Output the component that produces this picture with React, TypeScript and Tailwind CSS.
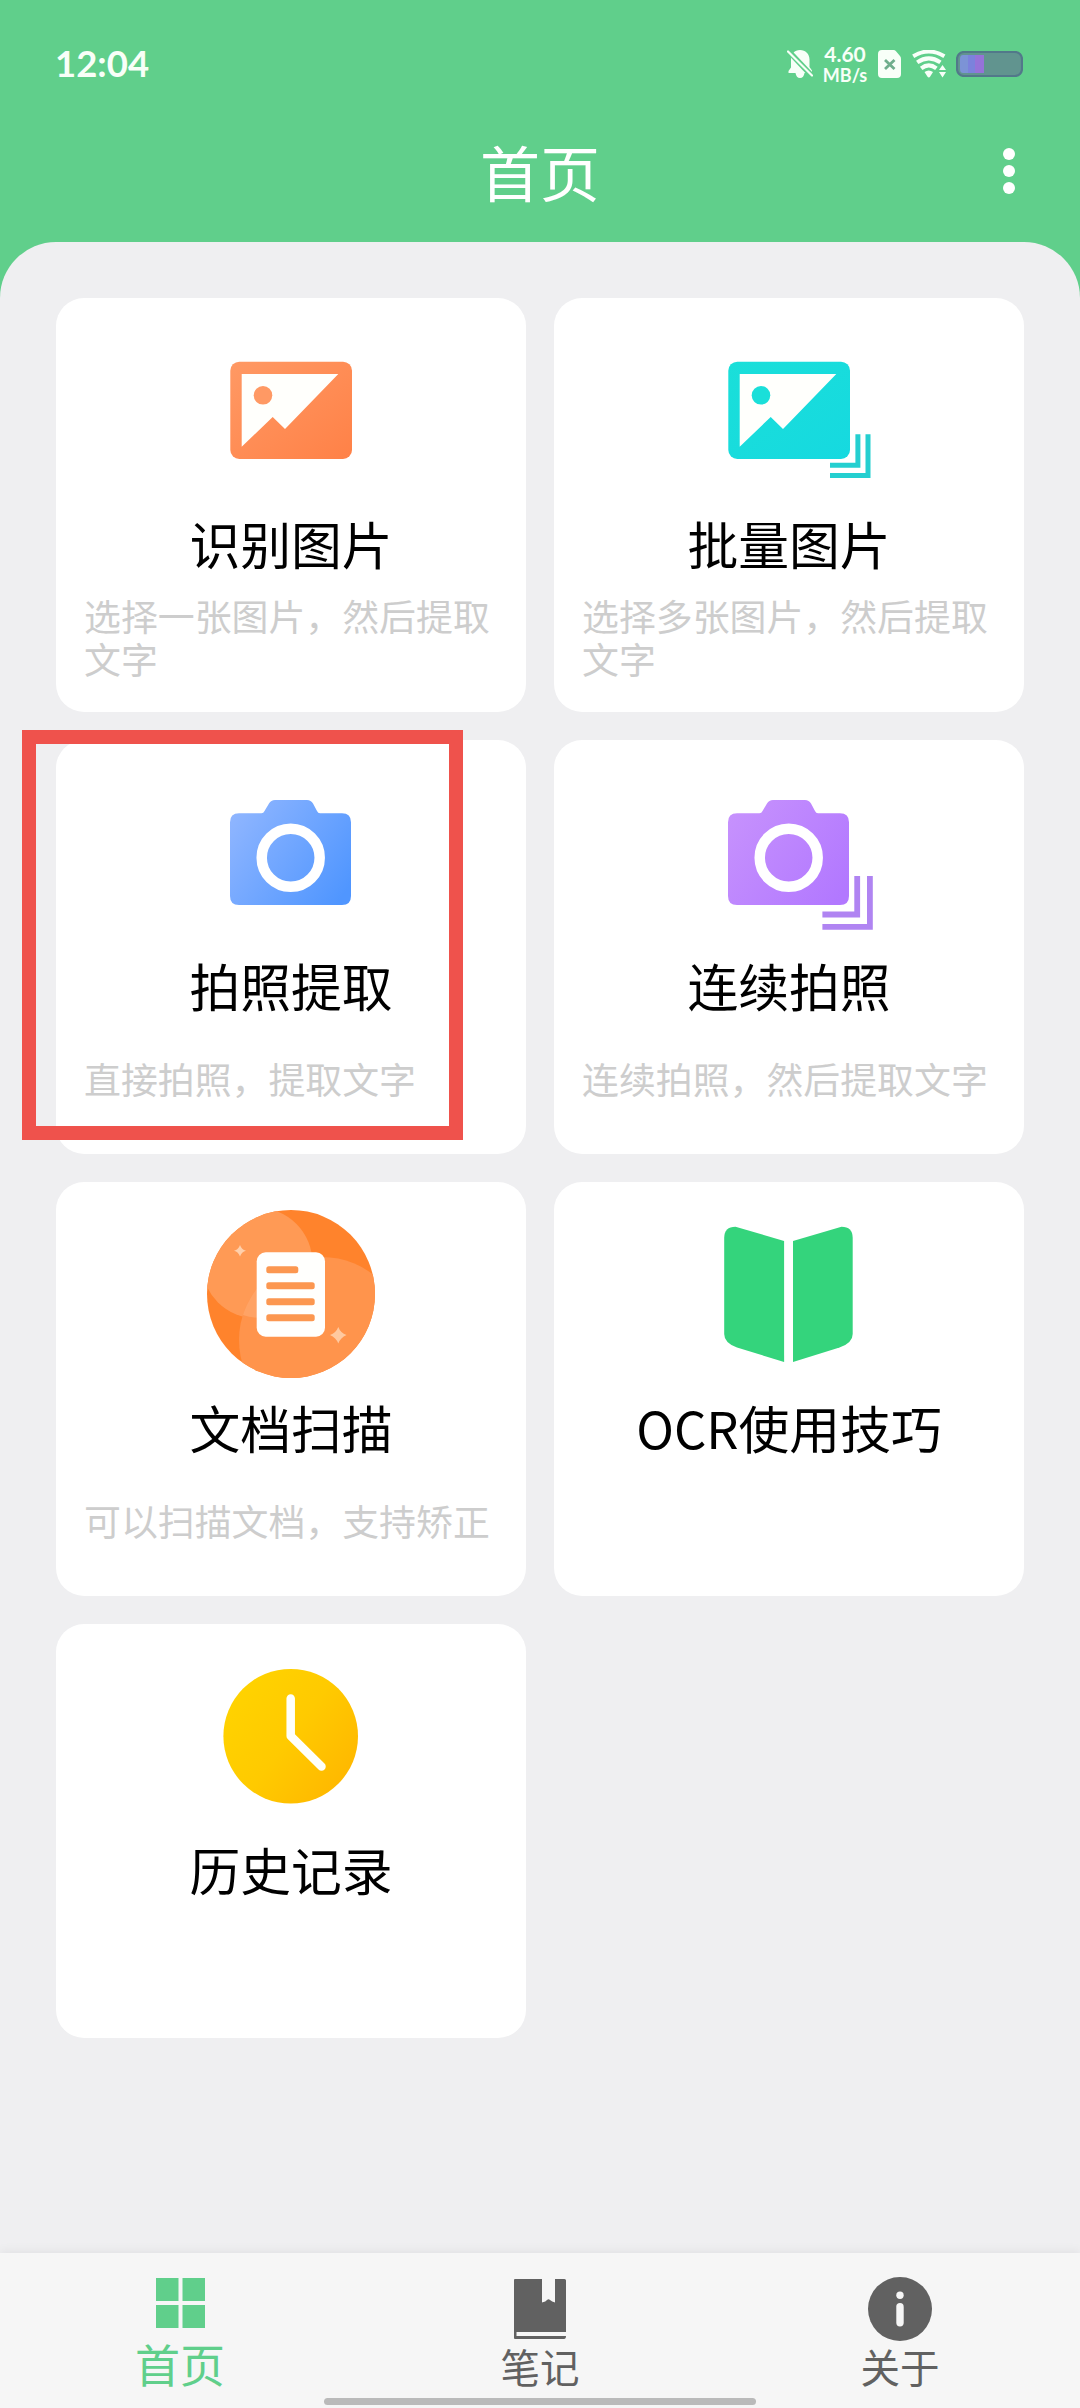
import type { ReactNode } from "react";

type Feature = {
    title: string;
    desc?: string;
    icon: ReactNode;
};

function BellOffIcon() {
    return (
        <svg width="26" height="30" viewBox="0 0 26 30" fill="none">
            <path d="M13 1C18.5 1 22.5 5 22.5 10.5V18L25 21.5V24H17.5C17 27 15.500 29 13 29S9 27 8.500 24H1.500V22L4 18.500V10.500C4 5 7.500 1 13 1Z" fill="#f8fff8" />
            <path d="M0 0.500L26 28" stroke="#60cf8b" strokeWidth="5.500" />
            <path d="M1 2.500L25 26.500" stroke="#f8fff8" strokeWidth="2.200" strokeLinecap="round" />
        </svg>
    );
}

function SimIcon() {
    return (
        <svg width="23" height="28" viewBox="0 0 23 28" fill="none">
            <path d="M4 0H15.500Q17 0 18 1.200L22 6Q23 7.200 23 9V24Q23 28 19 28H4Q0 28 0 24V4Q0 0 4 0Z" fill="#f8fff8" />
            <path d="M7 10L16.500 19M16.500 10L7 19" stroke="#6fae8c" strokeWidth="2.800" />
        </svg>
    );
}

function WifiIcon() {
    return (
        <svg width="35" height="28" viewBox="0 0 35 28" fill="none">
            <g stroke="#f8fff8" strokeWidth="4">
                <path d="M1.200 6.200Q16.800 -3.200 32.400 6.200" />
                <path d="M5.200 12.400Q16.800 4.400 28.400 12.400" />
                <path d="M9.200 18.400Q16.800 12.400 24.400 18.400" />
            </g>
            <path d="M12.500 22Q16.800 19 21 22L18.200 26.500Q16.800 28.500 15.400 26.500Z" fill="#f8fff8" />
            <path d="M30.500 12L35 20H26Z" fill="#60cf8b" />
            <path d="M30.500 15L34 20H27ZM30.500 27.500L34 22H27Z" fill="#f8fff8" />
        </svg>
    );
}

function BatteryIcon() {
    return (
        <svg width="67" height="26" viewBox="0 0 67 26">
            <rect x="1" y="1" width="65" height="24" rx="7" fill="#61948f" stroke="#52788a" strokeWidth="2.200" />
            <path d="M7 4H12V22H7Q4 22 4 18V8Q4 4 7 4Z" fill="#7c93d6" />
            <rect x="12" y="4" width="7" height="18" fill="#7b82dc" />
            <rect x="19" y="4" width="9" height="18" fill="#9573d8" />
        </svg>
    );
}

function PictureIcon({ id, from, to, stacked }: { id: string; from: string; to: string; stacked?: boolean }) {
    return (
        <svg width="168" height="168" viewBox="0 0 168 168">
            <defs>
                <linearGradient id={id} x1="0" y1="0" x2="1" y2="1">
                    <stop offset="0" stopColor={from} />
                    <stop offset="1" stopColor={to} />
                </linearGradient>
            </defs>
            <rect x="23.300" y="35.700" width="121.700" height="97.300" rx="9" fill={`url(#${id})`} />
            <path d="M34.700 48H131.300L78 103L65.700 91L34.700 120.700Z" fill="#fffffc" />
            <circle cx="56" cy="69.300" r="9.300" fill={from} />
            {stacked && (
                <path d="M125 139.200H152.900V108.300M125 149.500H163V108.300" fill="none" stroke="#24cfd0" strokeWidth="5" />
            )}
        </svg>
    );
}

function CameraIcon({ id, from, to, stacked }: { id: string; from: string; to: string; stacked?: boolean }) {
    return (
        <svg width="168" height="168" viewBox="0 0 168 168">
            <defs>
                <linearGradient id={id} x1="0" y1="0.200" x2="1" y2="0.800">
                    <stop offset="0" stopColor={from} />
                    <stop offset="1" stopColor={to} />
                </linearGradient>
            </defs>
            <path
                d="M32 45.300H54.500Q56.500 45.300 57.500 43L62 35.500Q64 32 68 32H100Q104 32 106 35.500L110 43Q111 45.300 113 45.300H135Q144 45.300 144 54.300V128Q144 137 135 137H32Q23 137 23 128V54.300Q23 45.300 32 45.300Z"
                fill={`url(#${id})`}
            />
            <circle cx="83.700" cy="89.700" r="29" fill="none" stroke="#fff" strokeWidth="10.500" />
            {stacked && (
                <path d="M117.400 146.500H152.200V108M117.400 158.900H164.900V108" fill="none" stroke="#b084f2" strokeWidth="5.800" />
            )}
        </svg>
    );
}

function DocumentIcon() {
    return (
        <svg width="168" height="168" viewBox="0 0 168 168">
            <defs>
                <clipPath id="doc-clip">
                    <circle cx="84" cy="84" r="84" />
                </clipPath>
            </defs>
            <g clipPath="url(#doc-clip)">
                <rect width="168" height="168" fill="#ff832c" />
                <circle cx="50" cy="53" r="55.500" fill="#ff9a55" />
                <circle cx="115" cy="130" r="83" fill="#ff944c" />
                <path d="M36 105Q39 95 46 84L56 70V108Q44 108 36 105Z" fill="#ffa365" />
            </g>
            <rect x="49.700" y="42.300" width="68.300" height="84.400" rx="9" fill="#fffffd" />
            <g fill="#fc9750">
                <rect x="59.300" y="56.300" width="32" height="7" rx="2.500" />
                <rect x="59.300" y="72.300" width="48.400" height="7" rx="2.500" />
                <rect x="59.300" y="88.300" width="48.400" height="7" rx="2.500" />
                <rect x="59.300" y="104.300" width="48.400" height="7" rx="2.500" />
            </g>
            <path d="M33 35Q34.500 39.500 39 40.700Q34.500 42 33 46.500Q31.500 42 27 40.700Q31.500 39.500 33 35Z" fill="#ffd0ac" />
            <path d="M131.300 117Q133.500 123 139.500 125Q133.500 127.500 131.300 133.500Q129 127.500 123 125Q129 123 131.300 117Z" fill="#ffc9a0" />
        </svg>
    );
}

function BookIcon() {
    return (
        <svg width="168" height="168" viewBox="0 0 168 168" fill="#34d47c">
            <path d="M79.100 31V152L32 137.500Q19.200 133 19.200 124V28Q19.200 16.700 30.500 16.700Z" />
            <path d="M88 31V152L134.500 137.500Q147.700 133 147.700 124V28Q147.700 16.700 136.500 16.700Z" />
        </svg>
    );
}

function ClockIcon() {
    return (
        <svg width="168" height="168" viewBox="0 0 168 168">
            <defs>
                <linearGradient id="clock-fill" x1="0.100" y1="0.200" x2="0.900" y2="0.800">
                    <stop offset="0" stopColor="#ffd200" />
                    <stop offset="0.500" stopColor="#ffca00" />
                    <stop offset="1" stopColor="#ffb900" />
                </linearGradient>
            </defs>
            <circle cx="83.700" cy="84.200" r="67.300" fill="url(#clock-fill)" />
            <path d="M83.700 46.500V84L114.500 114.500" fill="none" stroke="#fffffa" strokeWidth="8.500" strokeLinecap="round" strokeLinejoin="round" />
        </svg>
    );
}

const features: Feature[] = [
    { title: "识别图片", desc: "选择一张图片，然后提取文字", icon: <PictureIcon id="single" from="#ff9964" to="#ff8147" /> },
    { title: "批量图片", desc: "选择多张图片，然后提取文字", icon: <PictureIcon id="batch" from="#1adfd9" to="#16d9e0" stacked /> },
    { title: "拍照提取", desc: "直接拍照，提取文字", icon: <CameraIcon id="shoot" from="#8eb5ff" to="#5096ff" /> },
    { title: "连续拍照", desc: "连续拍照，然后提取文字", icon: <CameraIcon id="burst" from="#c691fd" to="#b278ff" stacked /> },
    { title: "文档扫描", desc: "可以扫描文档，支持矫正", icon: <DocumentIcon /> },
    { title: "OCR使用技巧", icon: <BookIcon /> },
    { title: "历史记录", icon: <ClockIcon /> },
];

function FeatureCard({ title, desc, icon }: Feature) {
    return (
        <div className="flex h-[414px] flex-col items-center rounded-[28px] bg-white px-7 pt-7">
            {icon}
            <h2 className="mt-[13px] h-[72px] text-[50.800px] leading-[72px] whitespace-nowrap text-black">{title}</h2>
            <div className="flex h-[115px] w-full items-center">
                <p className="text-[36.900px] leading-[43px] text-[#cdcdcd]">{desc}</p>
            </div>
        </div>
    );
}

function StatusBar() {
    return (
        <div className="flex h-[84px] items-end justify-between pr-[57px] pl-[55px] text-[#f8fff8]">
            <span className="h-[42px] font-[Lato] text-[36.500px] leading-[42px] font-bold">12:04</span>
            <div className="flex h-[40px] items-center font-[Lato] font-bold">
                <BellOffIcon />
                <div className="ml-[9px] flex w-[46px] flex-col items-center gap-[2px]">
                    <span className="text-[21px] leading-[21px]">4.60</span>
                    <span className="text-[18px] leading-[19px]">MB/s</span>
                </div>
                <div className="ml-[10px]">
                    <SimIcon />
                </div>
                <div className="ml-[11px]">
                    <WifiIcon />
                </div>
                <div className="ml-[9px]">
                    <BatteryIcon />
                </div>
            </div>
        </div>
    );
}

function BottomNav() {
    return (
        <nav className="relative grid h-[155px] shrink-0 grid-cols-3 bg-[#f6f6f6] text-[39.500px] text-[#616161] shadow-[0_-2px_10px_rgba(0,0,0,0.06)]">
            <div className="flex flex-col items-center pt-[25px] text-[45px] text-[#60cf8b]">
                <svg width="49" height="50" viewBox="0 0 49 50" fill="currentColor">
                    <path d="M0 0H22.500V23H0ZM26.500 0H49V23H26.500ZM0 27H22.500V50H0ZM26.500 27H49V50H26.500Z" />
                </svg>
                <span className="mt-[8px] h-[56px] leading-[56px]">首页</span>
            </div>
            <div className="flex flex-col items-center pt-[26px]">
                <svg width="52" height="60" viewBox="0 0 52 60" fill="currentColor">
                    <path d="M1 0H28V23.500Q32 22.500 33 21Q34.500 19.500 36 21Q38 22.500 41 23.500V0H50.500Q52 0 52 1.500V53H2.500V57H52Q52 60 50 60H1Q0 60 0 59V1Q0 0 1 0Z" />
                </svg>
                <span className="-mt-[1px] h-[56px] leading-[56px]">笔记</span>
            </div>
            <div className="flex flex-col items-center pt-[24px]">
                <svg width="64" height="64" viewBox="0 0 64 64">
                    <circle cx="32" cy="32" r="32" fill="currentColor" />
                    <circle cx="32" cy="18.300" r="3.700" fill="#f6f6f6" />
                    <rect x="28.300" y="26" width="7.400" height="23.500" rx="3.700" fill="#f6f6f6" />
                </svg>
                <span className="-mt-[3px] h-[56px] leading-[56px]">关于</span>
            </div>
            {/* Home indicator */}
            <div className="absolute bottom-[3px] left-1/2 h-[7px] w-[432px] -translate-x-1/2 rounded-full bg-[#bababa]" />
        </nav>
    );
}

export default function App() {
    return (
        <div lang="zh-CN" className="flex h-[2408px] w-[1080px] flex-col overflow-hidden bg-[#60cf8b] font-['Noto_Sans_CJK_SC',sans-serif]">
            <header className="h-[242px] shrink-0 text-white">
                <StatusBar />
                <div className="grid h-[158px] grid-cols-3 pt-[44px] pr-[65px] pl-[65px]">
                    <h1 className="col-start-2 text-center text-[60px] leading-[86px]">首页</h1>
                    <div className="flex h-[86px] flex-col items-end justify-center gap-[5px]">
                        <span className="size-[12px] rounded-full bg-white" />
                        <span className="size-[12px] rounded-full bg-white" />
                        <span className="size-[12px] rounded-full bg-white" />
                    </div>
                </div>
            </header>

            <main className="flex-1 rounded-t-[56px] bg-[#efeff1] px-14 pt-14">
                <div className="relative grid grid-cols-2 gap-7">
                    {features.map(f => (
                        <FeatureCard key={f.title} {...f} />
                    ))}
                    {/* Highlight around the third card */}
                    <div className="absolute top-[432px] -left-[34px] h-[410px] w-[441px] border-[14px] border-[#ef524c]" />
                </div>
            </main>

            <BottomNav />
        </div>
    );
}
